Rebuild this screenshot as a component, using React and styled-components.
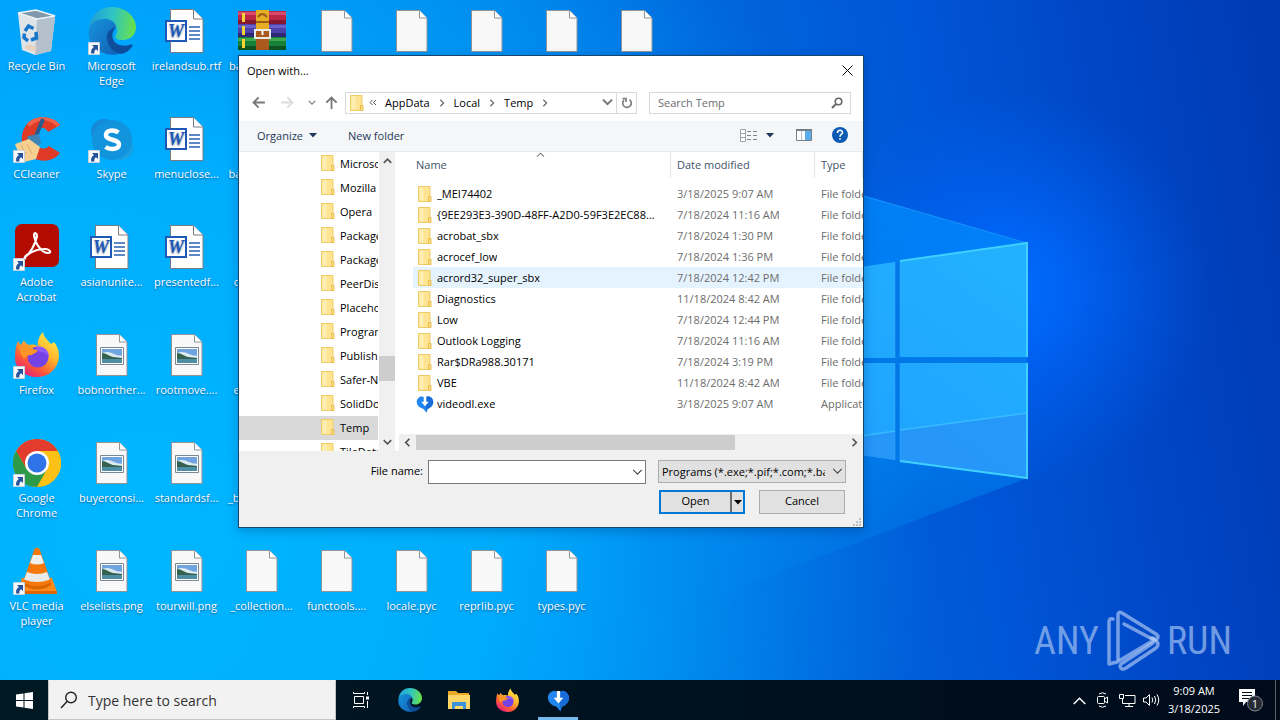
import React, { useId, useState } from 'react';
import styled, { createGlobalStyle } from 'styled-components';

const GlobalStyle = createGlobalStyle`
  * {
    box-sizing: border-box;
  }
  body {
    margin: 0;
    font-family: "Open Sans", "Noto Sans", sans-serif;
    font-size: 11px;
    overflow: hidden;
  }
  button, input, select {
    font: inherit;
    color: inherit;
    border: 0;
    padding: 0;
    margin: 0;
    background: none;
    border-radius: 0;
    outline: none;
  }
  svg {
    display: block;
    flex: none;
  }
`;

const Screen = styled.div`
  display: flex;
  flex-direction: column;
  height: 100vh;
  background: #0078d7;
`;

const Desktop = styled.main`
  position: relative;
  flex: 1;
  min-height: 0;
`;

const WallpaperSvg = styled.svg`
  position: absolute;
  inset: 0;
  width: 100%;
  height: 100%;
`;

const IconGrid = styled.div`
  position: relative;
  display: grid;
  grid-auto-flow: column;
  grid-template-rows: repeat(6, 108px);
  grid-auto-columns: 75px;
  margin-left: -1px;
`;

const Shortcut = styled.div`
  display: flex;
  flex-direction: column;
  align-items: center;
  gap: 3px;
  padding-top: 7px;
  color: #fff;
  line-height: 15px;
  text-align: center;
  text-shadow: 0 1px 2px rgba(0, 30, 80, 0.6);
`;

const ShortcutLabel = styled.span`
  width: 74px;
  overflow-wrap: break-word;
`;

const Watermark = styled.div`
  position: absolute;
  right: 48px;
  bottom: 7px;
  display: flex;
  align-items: center;
  gap: 6px;
  height: 64px;
  color: rgba(180, 205, 245, 0.65);
  font-family: "Roboto Condensed", "Open Sans Condensed", "Liberation Sans Narrow", Roboto, sans-serif;
  font-size: 38px;
  font-weight: 400;
`;

const Dialog = styled.section`
  position: absolute;
  left: 238px;
  top: 55px;
  width: 626px;
  border: 1px solid #17466f;
  background: #fff;
  color: #000;
  box-shadow: 0 3px 10px rgba(0, 20, 70, 0.25);
`;

const TitleBar = styled.header`
  display: flex;
  align-items: center;
  justify-content: space-between;
  height: 30px;
  padding: 0 8px 2px;
`;

const Title = styled.h1`
  margin: 0;
  font-size: 11px;
  font-weight: 400;
`;

const IconButton = styled.button`
  display: flex;
  align-items: center;
  justify-content: center;
  width: ${props => props.$w || 16}px;
  height: ${props => props.$h || 20}px;
`;

const NavRow = styled.div`
  display: flex;
  align-items: center;
  height: 35px;
  padding: 0 12px 2px 11px;
`;

const NavButtons = styled.div`
  display: flex;
  align-items: center;
  gap: 10px;
  width: 95px;
`;

const AddressBar = styled.div`
  display: flex;
  align-items: center;
  flex: 1;
  height: 22px;
  padding-left: 4px;
  border: 1px solid #d9d9d9;
`;

const Crumb = styled.button`
  padding: 0 8px;
`;

const ParentsButton = styled.button`
  padding-left: 5px;
`;

const Spacer = styled.div`
  flex: 1;
`;

const RefreshButton = styled(IconButton)`
  border-left: 1px solid #d9d9d9;
`;

const SearchField = styled.label`
  display: flex;
  align-items: center;
  width: 202px;
  height: 22px;
  margin-left: 12px;
  padding: 0 7px 0 8px;
  border: 1px solid #d9d9d9;
  input {
    flex: 1;
    min-width: 0;
  }
  input::placeholder {
    color: #6d6d6d;
    opacity: 1;
  }
`;

const Toolbar = styled.div`
  display: flex;
  align-items: center;
  height: 31px;
  padding: 0 15px 2px 18px;
  border-bottom: 1px solid #e8e9ea;
  background: #f5f6f7;
  color: #1e395b;
`;

const ToolButton = styled.button`
  display: flex;
  align-items: center;
  gap: 6px;
  margin-right: ${props => props.$after || 0}px;
`;

const Panes = styled.div`
  display: flex;
  height: 299px;
`;

const Tree = styled.ul`
  width: 139px;
  margin: 0;
  padding: 0;
  overflow: hidden;
  list-style: none;
`;

const TreeItem = styled.li`
  display: flex;
  align-items: center;
  gap: 5px;
  height: 24px;
  padding: 0 0 2px 82px;
  white-space: nowrap;
  background: ${props => (props.$selected ? '#d9d9d9' : 'transparent')};
`;

const VScroll = styled.div`
  display: flex;
  flex-direction: column;
  align-items: center;
  width: 16px;
  margin: 0 4px 0 1px;
  background: #f0f0f0;
`;

const VThumb = styled.div`
  width: 16px;
  height: 25px;
  margin: 187px 0 53px;
  background: #cdcdcd;
`;

const ListPane = styled.div`
  display: flex;
  flex-direction: column;
  justify-content: space-between;
  flex: 1;
  min-width: 0;
  overflow: hidden;
`;

const FileTable = styled.table`
  width: 100%;
  table-layout: fixed;
  border-collapse: collapse;
  white-space: nowrap;
  td, th {
    padding: 0;
    overflow: hidden;
    font-weight: 400;
    text-align: left;
  }
`;

const Gutter = styled.col`
  width: ${props => props.$w}px;
`;

const HeadLabel = styled.div`
  position: relative;
  height: 26px;
  margin-bottom: 5px;
  padding-left: ${props => props.$pad}px;
  border-right: 1px solid #e5e5e5;
  color: #43536b;
  line-height: 26px;
`;

const SortMark = styled.span`
  position: absolute;
  left: 123px;
  top: -2px;
`;

const FileRow = styled.tr`
  height: 21px;
  td:not(:first-child) {
    background: ${props => (props.$hot ? '#e5f3ff' : 'transparent')};
  }
`;

const NameCell = styled.div`
  display: flex;
  align-items: center;
  gap: 3px;
  height: 21px;
  padding: 0 12px 0 3px;
  span {
    overflow: hidden;
    text-overflow: ellipsis;
  }
`;

const FileIcon = styled.i`
  display: flex;
  justify-content: center;
  flex: none;
  width: 18px;
`;

const MetaCell = styled.td`
  color: #6d6d6d;
  div {
    padding-left: 6px;
  }
`;

const HScroll = styled.div`
  display: flex;
  align-items: center;
  height: 17px;
  background: #f0f0f0;
`;

const HThumb = styled.div`
  width: 319px;
  height: 15px;
  background: #cdcdcd;
`;

const Footer = styled.footer`
  display: flex;
  flex-direction: column;
  gap: 6px;
  height: 76px;
  padding: 9px 17px 0 0;
  background: #f0f0f0;
`;

const FooterRow = styled.div`
  display: flex;
  align-items: flex-start;
  justify-content: flex-end;
  height: 24px;
  line-height: 22px;
`;

const ButtonRow = styled(FooterRow)`
  padding-right: 1px;
`;

const FileNameLabel = styled.label`
  margin-right: 5px;
`;

const ComboBox = styled.div`
  display: flex;
  align-items: center;
  width: 218px;
  height: 24px;
  margin-right: 12px;
  border: 1px solid #7a7a7a;
  background: #fff;
  input {
    flex: 1;
    min-width: 0;
    padding-left: 4px;
  }
`;

const SelectWrap = styled.div`
  position: relative;
  width: 188px;
  height: 23px;
  select {
    width: 100%;
    height: 100%;
    padding: 0 20px 2px 3px;
    border: 1px solid #adadad;
    background: #e1e1e1;
    appearance: none;
  }
`;

const SelectArrow = styled.span`
  position: absolute;
  right: 3px;
  top: 6px;
  pointer-events: none;
`;

const SplitButton = styled.div`
  display: flex;
  width: 86px;
  height: 24px;
  margin-right: 14px;
  border: 2px solid #0078d7;
  background: #e1e1e1;
  button:first-child {
    flex: 1;
    line-height: 18px;
    padding-bottom: 2px;
  }
  button:last-child {
    display: flex;
    align-items: center;
    justify-content: center;
    width: 13px;
    border-left: 2px solid #6d6d6d;
  }
`;

const PlainButton = styled.button`
  width: 86px;
  height: 24px;
  padding-bottom: 2px;
  border: 1px solid #adadad;
  background: #e1e1e1;
  line-height: 20px;
`;

const Grip = styled.svg`
  position: absolute;
  right: 2px;
  bottom: 1px;
`;

const TaskBar = styled.nav`
  display: flex;
  height: 40px;
  background: linear-gradient(90deg, #001923, #00121f 50%, #000b1a);
  color: #fff;
`;

const TaskButton = styled.button`
  display: flex;
  align-items: center;
  justify-content: center;
  width: ${props => props.$w || 49}px;
  border-bottom: 3px solid transparent;
  border-top: 3px solid transparent;
`;

const RunningButton = styled(TaskButton)`
  width: 40px;
  margin-left: 6px;
  border-bottom-color: #76b9ed;
`;

const TaskSearch = styled.label`
  display: flex;
  align-items: center;
  gap: 10px;
  width: 288px;
  padding-left: 11px;
  border: 1px solid #c4c4c4;
  border-top-color: #f2f2f2;
  background: #f2f2f2;
  color: #222;
  font-size: 14px;
  input {
    width: 200px;
  }
  input::placeholder {
    color: #333;
    opacity: 1;
  }
`;

const Tray = styled.div`
  display: flex;
  align-items: center;
  margin-left: auto;
`;

const Clock = styled.time`
  display: flex;
  flex-direction: column;
  width: 62px;
  line-height: 18px;
  text-align: center;
`;

const ShowDesktop = styled.button`
  width: 5px;
  height: 40px;
  border-left: 1px solid #56606b;
`;

const stroke = { fill: 'none', strokeLinecap: 'square' };

const Chevron = ({ dir = 'down', size = 9, color = '#444', w = 1.5 }) => {
  const d = {
    down: 'M1.5 3 L5 6.5 L8.5 3',
    up: 'M1.5 7 L5 3.5 L8.5 7',
    left: 'M6.5 1.5 L3 5 L6.5 8.5',
    right: 'M3.5 1.5 L7 5 L3.5 8.5',
  }[dir];
  return (
    <svg width={size} height={size} viewBox="0 0 10 10">
      <path d={d} {...stroke} stroke={color} strokeWidth={w} />
    </svg>
  );
};

const Caret = ({ color = '#1e395b' }) => (
  <svg width="8" height="5" viewBox="0 0 8 5"><path d="M0 0h8L4 4.5z" fill={color} /></svg>
);

const FolderIcon = () => (
  <svg width="14" height="16" viewBox="0 0 14 16">
    <path d="M.5.5h11.500v15H.5z" fill="#ffe593" stroke="#edcb65" />
    <path d="M1.500 1.500h4v13h-4z" fill="#ffeeb4" />
    <path d="M10.500 10.500h2.500v5h-2.500z" fill="#ffdc79" stroke="#e6bf55" />
  </svg>
);

const DownloadHeart = ({ size = 18 }) => (
  <svg width={size} height={size} viewBox="0 0 24 24">
    <path d="M5 2.500C2 4 .5 7 1 10c.6 5 5 7.500 9 8.500l4 5 1.500-5C20 17 23 13 23 9.500c0-3-2-6-5-7-2-.5-4 0-6 1.500C10 2 7.500 1.500 5 2.500z" fill="#2186f0" />
    <path d="M12 3.500c2-1.500 4-2 6-1.500 3 1 5 4 5 7 0 5-4 8.500-8 9.500l-1 4z" fill="#176cd8" />
    <path d="M10.300 2h3.400v7H17l-5 6-5-6h3.300z" fill="#fff" />
  </svg>
);

const ShortcutArrow = () => (
  <g>
    <path d="M.5 35.500h11v12H.5z" fill="#f7f9fb" stroke="#c3d2de" />
    <path d="M4 38h6v6L8 42.200C6.600 43.200 6.200 44.400 6.400 46.500H3.200C2.600 43.500 3.600 41.400 5.900 40z" fill="#25539b" />
  </g>
);

const Page = ({ x = 8, y = 3 }) => (
  <g transform={`translate(${x} ${y})`}>
    <path d="M.5.5h23L31 8v33.500H.5z" fill="#f8f8f8" stroke="#8f9499" />
    <path d="M23.500.5V8H31" fill="#fff" stroke="#8f9499" />
  </g>
);

const EdgeShape = () => {
  const id = useId();
  return (
    <g>
      <defs>
        <linearGradient id={id + 'a'} x1="0" x2="1" y1="0.300" y2="0.400">
          <stop offset="0" stopColor="#1f9bd8" />
          <stop offset=".5" stopColor="#2fc5c4" />
          <stop offset="1" stopColor="#69e04a" />
        </linearGradient>
        <linearGradient id={id + 'b'} x1="0" x2="1" y1="0" y2="1">
          <stop offset="0" stopColor="#1693dc" />
          <stop offset="1" stopColor="#1160b4" />
        </linearGradient>
      </defs>
      <path d="M1 22C2 9 11 0 24 0s24 9.500 24 20c0 8-6 13-13 13-6 0-9-2-7-5 3-4 1-13-9-14C11 13 4 16 1 22z" fill={`url(#${id}a)`} />
      <path d="M1 22c2-6 9-11 18-10 6 1 9 5 9 8-5 0-9 4-9 10 0 7 5 14 12 17C14 51-2 38 1 22z" fill={`url(#${id}b)`} />
      <path d="M28 20c-6 1-10 5-9 12 1 8 7 14 14 15 5-1 9-4 11.500-8 .6-1-.4-2-1.500-1.400C34 41 23 37 24.500 27c.4-3 2-5 3.500-7z" fill="#0d4d9c" />
    </g>
  );
};

const FirefoxShape = () => {
  const id = useId();
  return (
    <g>
      <defs>
        <linearGradient id={id} x1=".85" x2=".2" y1=".05" y2="1">
          <stop offset="0" stopColor="#fff04a" />
          <stop offset=".4" stopColor="#ffb02b" />
          <stop offset=".7" stopColor="#ff5a36" />
          <stop offset="1" stopColor="#e31587" />
        </linearGradient>
      </defs>
      <path d="M5 10c1 2 2 3 3 4l3-5c1 3 3 4 5 5 4-1 7 0 9 1-1-6 2-11 5-14 1 6 5 8 8 12l3-2c5 6 6 13 4 20-3 9-11 15-21 15C12 46 2 38 2 27 2 20 3 14 5 10z" fill={`url(#${id})`} />
      <circle cx="25" cy="26" r="10.500" fill="#7542e5" />
      <path d="M6 14c4 2 8 1 11 2 3 2 5 3 8 3-1 3-4 3-6 5-2 0-6 0-8 4-3-4-5-9-5-14z" fill="#ff9526" />
      <path d="M22 16c8-2 14 3 14 10-2-4-6-5-9-5-2-1-4-3-5-5z" fill="#9059ff" />
    </g>
  );
};

const WordGlyph = () => (
  <g>
    <g transform="translate(7 2)">
      <path d="M.5.5h23L33 10v33.500H.5z" fill="#fff" stroke="#777c82" />
      <path d="M23.500.5V10H33" fill="#fff" stroke="#777c82" />
    </g>
    <path d="M26 20h11M26 24h11M26 28h11M26 32h11" stroke="#2b5fb3" strokeWidth="1.500" />
    <path d="M3 14h20v20H3z" fill="#fff" stroke="#1d59b5" strokeWidth="2" />
    <text x="13" y="30" textAnchor="middle" fontFamily="Liberation Serif, serif" fontWeight="700" fontStyle="italic" fontSize="18" fill="#1d59b5">W</text>
  </g>
);

const PictureGlyph = () => (
  <g>
    <Page />
    <path d="M12.500 16.500h23v17h-23z" fill="#fff" stroke="#7b8790" />
    <path d="M14 18h20v8H14z" fill="#6fa4e0" />
    <path d="M14 22c5-2 8-1 12 1s6 1 8 2v3H14z" fill="#dceaf2" />
    <path d="M14 22c4 0 7 3 11 4l9 1v2H14z" fill="#35614f" />
    <path d="M14 28h20v4H14z" fill="#4f8fa6" />
  </g>
);

const RecycleGlyph = () => (
  <g>
    <path d="M5 6l19 6 18-2-4 34-16 4-13-5z" fill="#dfe4e8" />
    <path d="M24 12l18-2-4 34-16 4z" fill="#b4c1cc" />
    <path d="M5 6l18-3 19 6-18 3z" fill="#7f98aa" stroke="#eef4f8" strokeWidth="1.500" />
    <g fill="none" stroke="#1676c9" strokeWidth="3.500">
      <path d="M12 24l3.500-5 5 2.500" />
      <path d="M23 25l.5 6-5.500 2" />
      <path d="M15 34l-4-3.500.5-4" />
    </g>
    <path d="M11 40l5-3 8 3-2 5-9-3z" fill="#eccdb6" opacity=".8" />
  </g>
);

const CCleanerGlyph = () => (
  <g>
    <path d="M47 10C40 1 23-1 14 9c-9 11-6 27 6 34 10 5 21 3 27-5l-11-7c-4 4-10 3-12-1-4-5-3-13 2-16 4-2 7-1 9 3z" fill="#df3a25" />
    <path d="M47 10C40 1 23-1 14 9l3 3C25 3 38 4 44 12z" fill="#f0644d" />
    <path d="M30 4l-9 22" stroke="#285c8e" strokeWidth="4" />
    <path d="M15 21l11-2 2 10-9 4-6-5z" fill="#3e83b5" />
    <path d="M2 29l14-5 11 8-4 12-12 3-4-5z" fill="#f6cf92" />
    <path d="M8 30l5 9M14 29l5 10" stroke="#ddaa65" />
  </g>
);

const SkypeGlyph = () => (
  <g>
    <circle cx="16" cy="17" r="13" fill="#1688d6" />
    <circle cx="33" cy="33" r="12" fill="#1aa0e3" />
    <circle cx="24" cy="25" r="20" fill="#1294dc" />
    <path d="M30.500 17.500c-2-1.500-4-2-6.500-2-4 0-6 2-6 4.500 0 6 13 3.500 13 9.500 0 3-3 4.500-6.500 4.500-3 0-5-.5-7-2" fill="none" stroke="#fff" strokeWidth="4.500" />
  </g>
);

const AcrobatGlyph = () => (
  <g>
    <rect x="2" y="1" width="44" height="43" rx="7" fill="#b30b00" />
    <path d="M12 34c5-3 11-14 12-21 0-3-3-4-3-1 1 9 8 18 14 18 4 0 2-4-3-4-7 0-14 3-18 6-3 2-3 4-1 3" fill="none" stroke="#fff" strokeWidth="2.200" />
  </g>
);

const ChromeGlyph = () => (
  <g>
    <circle cx="24" cy="24" r="24" fill="#fbbc05" />
    <path d="M3.200 12A24 24 0 0 1 44.800 12H24L13.600 30z" fill="#e33b2e" />
    <path d="M3.200 12A24 24 0 0 0 24 48L34.400 30 24 34 13.600 30z" fill="#2c9a47" />
    <path d="M24 12h20.800A24 24 0 0 1 24 48l10.400-18z" fill="#fbc116" />
    <circle cx="24" cy="24" r="12" fill="#fff" />
    <circle cx="24" cy="24" r="9.500" fill="#2f73e8" />
  </g>
);

const VlcGlyph = () => (
  <g>
    <path d="M9 31h30l5 14H5z" fill="#fb8a1a" />
    <path d="M5 44h39v3H5z" fill="#e06500" />
    <path d="M10 35q14 8 28 0v3q-14 9-28 0z" fill="#d96400" />
    <path d="M21.500 2q2.500-2.500 5 0L38 35q-14 8-28 0z" fill="#f7780a" />
    <path d="M20 8h8l3 8q-7 3-14 0z" fill="#eef0f0" />
    <path d="M14 25q10 4 20 0l3 7.500q-13 5-26 0z" fill="#e8eaea" />
  </g>
);

const WinrarGlyph = () => (
  <g>
    <rect x="0" y="4" width="48" height="13" fill="#bd2747" />
    <path d="M0 5h48v3H0z" fill="#d84a6c" />
    <path d="M0 13h48v4H0z" fill="#861730" />
    <rect x="0" y="17" width="48" height="13" fill="#4b41ab" />
    <path d="M0 18h48v3H0z" fill="#6a60c4" />
    <path d="M0 26h48v4H0z" fill="#2f2878" />
    <rect x="0" y="30" width="48" height="13" fill="#178237" />
    <path d="M0 31h48v3H0z" fill="#3da64e" />
    <path d="M0 39h48v4H0z" fill="#0c5422" />
    <path d="M4 6h3v9H4zM4 19h3v9H4zM4 32h3v9H4z" fill="#f4d432" />
    <path d="M18 3h13v40H18z" fill="#a95a1c" />
    <path d="M18 3h13v19H18z" fill="#e6ae23" />
    <path d="M20 10q4-6 9 0M18 15h13" fill="none" stroke="#9a5b12" strokeWidth="2" />
    <path d="M17 23h15v8H17z" fill="none" stroke="#e9e9e9" strokeWidth="2" />
    <path d="M24.500 23v5" stroke="#fff" strokeWidth="2" />
  </g>
);

const glyphs = {
  recycle: RecycleGlyph,
  edge: EdgeShape,
  word: WordGlyph,
  rar: WinrarGlyph,
  page: Page,
  ccleaner: CCleanerGlyph,
  skype: SkypeGlyph,
  acrobat: AcrobatGlyph,
  firefox: FirefoxShape,
  picture: PictureGlyph,
  chrome: ChromeGlyph,
  vlc: VlcGlyph,
};

// filled column by column, six per column; null leaves the cell free
const shortcuts = [
  ['recycle', 'Recycle Bin'],
  ['ccleaner', 'CCleaner', true],
  ['acrobat', 'Adobe Acrobat', true],
  ['firefox', 'Firefox', true],
  ['chrome', 'Google Chrome', true],
  ['vlc', 'VLC media player', true],
  ['edge', 'Microsoft Edge', true],
  ['skype', 'Skype', true],
  ['word', 'asianunite...'],
  ['picture', 'bobnorther...'],
  ['picture', 'buyerconsi...'],
  ['picture', 'elselists.png'],
  ['word', 'irelandsub.rtf'],
  ['word', 'menuclose...'],
  ['word', 'presentedf...'],
  ['picture', 'rootmove....'],
  ['picture', 'standardsf...'],
  ['picture', 'tourwill.png'],
  ['rar', 'base_librar...'],
  ['page', 'base64.pyc...'],
  ['page', 'codecs.pyc'],
  ['page', 'enum.pyc..'],
  ['page', '_bootlocale...'],
  ['page', '_collection...'],
  ['page', ''], null, null, null, null, ['page', 'functools....'],
  ['page', ''], null, null, null, null, ['page', 'locale.pyc'],
  ['page', ''], null, null, null, null, ['page', 'reprlib.pyc'],
  ['page', ''], null, null, null, null, ['page', 'types.pyc'],
  ['page', ''],
];

const treeFolders = [
  'Microsoft', 'Mozilla', 'Opera', 'Packages', 'Package Cache', 'PeerDistRepub', 'Placeholder',
  'Programs', 'Publishers', 'Safer-Networking', 'SolidDocuments', 'Temp', 'TileDataLayer',
];

const files = [
  ['_MEI74402', '3/18/2025 9:07 AM', 'File folder'],
  ['{9EE293E3-390D-48FF-A2D0-59F3E2EC88E1}', '7/18/2024 11:16 AM', 'File folder'],
  ['acrobat_sbx', '7/18/2024 1:30 PM', 'File folder'],
  ['acrocef_low', '7/18/2024 1:36 PM', 'File folder'],
  ['acrord32_super_sbx', '7/18/2024 12:42 PM', 'File folder'],
  ['Diagnostics', '11/18/2024 8:42 AM', 'File folder'],
  ['Low', '7/18/2024 12:44 PM', 'File folder'],
  ['Outlook Logging', '7/18/2024 11:16 AM', 'File folder'],
  ['Rar$DRa988.30171', '7/18/2024 3:19 PM', 'File folder'],
  ['VBE', '11/18/2024 8:42 AM', 'File folder'],
  ['videodl.exe', '3/18/2025 9:07 AM', 'Application'],
];

const Wallpaper = () => (
  <WallpaperSvg viewBox="0 0 1280 680" preserveAspectRatio="xMidYMid slice" aria-hidden="true">
    <defs>
      <linearGradient id="sky" x1="0" x2="1" y1="0.080" y2="0">
        <stop offset="0" stopColor="#00a6fb" />
        <stop offset=".2" stopColor="#009cf5" />
        <stop offset=".4" stopColor="#0083ea" />
        <stop offset=".55" stopColor="#0067dd" />
        <stop offset=".72" stopColor="#0055d6" />
        <stop offset=".86" stopColor="#0045c4" />
        <stop offset="1" stopColor="#0039b0" />
      </linearGradient>
      <radialGradient id="pool" gradientUnits="userSpaceOnUse" cx="150" cy="520" r="780">
        <stop offset="0" stopColor="#00b6ff" />
        <stop offset=".45" stopColor="#00b0ff" stopOpacity=".85" />
        <stop offset="1" stopColor="#0094f5" stopOpacity="0" />
      </radialGradient>
      <radialGradient id="halo" gradientUnits="userSpaceOnUse" cx="1010" cy="290" r="200">
        <stop offset="0" stopColor="#006cff" />
        <stop offset=".3" stopColor="#0069ff" stopOpacity=".75" />
        <stop offset="1" stopColor="#0060f0" stopOpacity="0" />
      </radialGradient>
      <linearGradient id="cone" x1="0" x2="0" y1="0" y2="1">
        <stop offset="0" stopColor="#008fff" stopOpacity=".7" />
        <stop offset=".6" stopColor="#008cf5" stopOpacity=".6" />
        <stop offset="1" stopColor="#008cf0" stopOpacity=".05" />
      </linearGradient>
      <linearGradient id="glass" x1="0" x2="1" y1="1" y2="0">
        <stop offset="0" stopColor="#1e9cff" />
        <stop offset="1" stopColor="#22b2ff" />
      </linearGradient>
    </defs>
    <path d="M0 0h1280v680H0z" fill="url(#sky)" />
    <path d="M0 0h1280v680H0z" fill="url(#pool)" />
    <path d="M0 0h1280v680H0z" fill="url(#halo)" />
    <path d="M640 130L1027 243V478L640 625z" fill="url(#cone)" />
    <path d="M863 196L1027 243" stroke="#2fa6ff" opacity=".5" />
    <path d="M700 290L895 262V358H700zM900 261L1027 243V357H900zM700 363H895V460L700 432zM900 363H1027V478L900 461z" fill="url(#glass)" />
    <path d="M895 262h5v96h127v5H900v98h-5v-98H700v-5h195z" fill="#0078e8" />
    <path d="M900 430L1027 413V478L900 461zM800 445L895 431V460L800 446z" fill="#2b8df5" opacity=".6" />
    <path d="M800 445L895 431M900 430L1027 413" stroke="#37bcff" strokeWidth="1.500" />
    <path d="M895 262V358M900 261V357M895 363V460M900 363V461" stroke="#3aa9ff" opacity=".5" />
    <path d="M900 261L1027 243V357M900 461L1027 478V363" fill="none" stroke="#3fd0ff" strokeWidth="2" />
  </WallpaperSvg>
);

const DesktopShortcut = ({ glyph, label, linked }) => {
  const Glyph = glyphs[glyph];
  return (
    <Shortcut>
      <svg width="48" height="48" viewBox="0 0 48 48">
        <Glyph />
        {linked && <ShortcutArrow />}
      </svg>
      <ShortcutLabel>{label}</ShortcutLabel>
    </Shortcut>
  );
};

const Arrow = ({ d, color = '#777' }) => (
  <svg width="13" height="13" viewBox="0 0 13 13">
    <path d={d} {...stroke} stroke={color} strokeWidth="1.800" />
  </svg>
);

const OpenDialog = () => {
  const [query, setQuery] = useState('');
  const [fileName, setFileName] = useState('');

  return (
    <Dialog role="dialog" aria-label="Open with...">
      <TitleBar>
        <Title>Open with...</Title>
        <IconButton aria-label="Close">
          <svg width="11" height="11" viewBox="0 0 11 11"><path d="M.5.5l10 10M10.500.5l-10 10" stroke="#000" /></svg>
        </IconButton>
      </TitleBar>

      <NavRow>
        <NavButtons>
          <IconButton aria-label="Back"><Arrow d="M12 6.500H2M6 2L1.500 6.500 6 11" /></IconButton>
          <IconButton $w={22} aria-label="Forward"><Arrow d="M1 6.500h10M7 2l4.500 4.500L7 11" color="#dcdcdc" /></IconButton>
          <IconButton $w={7} aria-label="Recent locations"><Chevron size={8} color="#888" /></IconButton>
          <IconButton $w={13} aria-label="Up"><Arrow d="M6.500 12V2M2 6l4.500-4.500L11 6" /></IconButton>
        </NavButtons>
        <AddressBar>
          <FolderIcon />
          <ParentsButton aria-label="Parent folders">
            <svg width="8" height="7" viewBox="0 0 8 7"><path d="M3.500 1L1 3.500 3.500 6M7 1L4.500 3.500 7 6" fill="none" stroke="#555" /></svg>
          </ParentsButton>
          {['AppData', 'Local', 'Temp'].map(name => (
            <React.Fragment key={name}>
              <Crumb>{name}</Crumb>
              <Chevron dir="right" size={8} color="#666" />
            </React.Fragment>
          ))}
          <Spacer />
          <IconButton $w={18} aria-label="Previous locations"><Chevron size={11} color="#777" w={1.8} /></IconButton>
          <RefreshButton $w={20} aria-label="Refresh">
            <svg width="12" height="12" viewBox="0 0 12 12">
              <path d="M8.500 2.600A4.300 4.300 0 1 1 3 3M1.500 1.500H5V5" fill="none" stroke="#777" strokeWidth="1.600" />
            </svg>
          </RefreshButton>
        </AddressBar>
        <SearchField>
          <input aria-label="Search Temp" placeholder="Search Temp" value={query} onChange={e => setQuery(e.target.value)} />
          <svg width="12" height="12" viewBox="0 0 12 12">
            <circle cx="7.500" cy="4.500" r="3.300" fill="none" stroke="#666" strokeWidth="1.600" />
            <path d="M5 7L1 11" stroke="#666" strokeWidth="2" />
          </svg>
        </SearchField>
      </NavRow>

      <Toolbar>
        <ToolButton $after={31}>Organize <Caret /></ToolButton>
        <ToolButton>New folder</ToolButton>
        <Spacer />
        <ToolButton $after={22} aria-label="Change view">
          <svg width="20" height="13" viewBox="0 0 20 13">
            <path d="M.5.500h5v12h-5zM.5 4.500h5M.5 8.500h5" fill="#fff" stroke="#9aa3ab" />
            <path d="M7 2.500h4M13 2.500h4M7 6.500h4M13 6.500h4M7 10.500h4M13 10.500h4" stroke="#7d8790" />
          </svg>
          <Caret />
        </ToolButton>
        <ToolButton $after={20} aria-label="Preview pane">
          <svg width="16" height="12" viewBox="0 0 16 12">
            <path d="M.5.500h15v11H.5z" fill="#fff" stroke="#72808c" />
            <path d="M0 0h16v2H0z" fill="#72808c" />
            <path d="M5.500 2v9" stroke="#b8c3cc" />
            <path d="M9 2h6v9H9z" fill="#5aaceb" />
          </svg>
        </ToolButton>
        <ToolButton aria-label="Help">
          <svg width="16" height="16" viewBox="0 0 16 16">
            <circle cx="8" cy="8" r="8" fill="#0b5bb5" />
            <path d="M5.500 6c0-3.500 5-3.500 5-.5C10.500 7.500 8 7.500 8 9.700M8 11.200v1.600" fill="none" stroke="#fff" strokeWidth="1.600" />
          </svg>
        </ToolButton>
      </Toolbar>

      <Panes>
        <Tree>
          {treeFolders.map(name => (
            <TreeItem key={name} $selected={name === 'Temp'}><FolderIcon />{name}</TreeItem>
          ))}
        </Tree>
        <VScroll>
          <IconButton $h={17} aria-label="Scroll up"><Chevron dir="up" color="#505050" w={1.8} /></IconButton>
          <VThumb />
          <IconButton $h={17} aria-label="Scroll down"><Chevron color="#505050" w={1.8} /></IconButton>
        </VScroll>
        <ListPane>
          <FileTable>
            <colgroup>
              <Gutter $w={14} />
              <Gutter $w={258} />
              <Gutter $w={144} />
              <col />
            </colgroup>
            <thead>
              <tr>
                <th />
                <th><HeadLabel $pad={3}>Name<SortMark><Chevron dir="up" color="#777" w={1.2} /></SortMark></HeadLabel></th>
                <th><HeadLabel $pad={6}>Date modified</HeadLabel></th>
                <th><HeadLabel $pad={6}>Type</HeadLabel></th>
              </tr>
            </thead>
            <tbody>
              {files.map(([name, date, type]) => (
                <FileRow key={name} $hot={name === 'acrord32_super_sbx'}>
                  <td />
                  <td>
                    <NameCell>
                      <FileIcon>{type === 'Application' ? <DownloadHeart /> : <FolderIcon />}</FileIcon>
                      <span>{name}</span>
                    </NameCell>
                  </td>
                  <MetaCell><div>{date}</div></MetaCell>
                  <MetaCell><div>{type}</div></MetaCell>
                </FileRow>
              ))}
            </tbody>
          </FileTable>
          <HScroll>
            <IconButton $w={17} aria-label="Scroll left"><Chevron dir="left" color="#505050" w={1.8} /></IconButton>
            <HThumb />
            <Spacer />
            <IconButton $w={17} aria-label="Scroll right"><Chevron dir="right" color="#505050" w={1.8} /></IconButton>
          </HScroll>
        </ListPane>
      </Panes>

      <Footer>
        <FooterRow>
          <FileNameLabel htmlFor="file-name">File name:</FileNameLabel>
          <ComboBox>
            <input id="file-name" value={fileName} onChange={e => setFileName(e.target.value)} />
            <IconButton aria-label="Recent files"><Chevron size={11} w={1} /></IconButton>
          </ComboBox>
          <SelectWrap>
            <select aria-label="File type">
              <option>Programs (*.exe;*.pif;*.com;*.bat;*.cmd)</option>
            </select>
            <SelectArrow><Chevron size={11} w={1} /></SelectArrow>
          </SelectWrap>
        </FooterRow>
        <ButtonRow>
          <SplitButton>
            <button>Open</button>
            <button aria-label="Open options"><Caret color="#000" /></button>
          </SplitButton>
          <PlainButton>Cancel</PlainButton>
        </ButtonRow>
      </Footer>
      <Grip width="9" height="9" viewBox="0 0 9 9">
        <path d="M7 1h2v2H7zM7 4h2v2H7zM7 7h2v2H7zM4 4h2v2H4zM4 7h2v2H4zM1 7h2v2H1z" fill="#bfbfbf" />
      </Grip>
    </Dialog>
  );
};

const App = () => (
  <Screen>
    <GlobalStyle />
    <Desktop>
      <Wallpaper />
      <IconGrid>
        {shortcuts.map((item, i) =>
          item ? <DesktopShortcut key={i} glyph={item[0]} label={item[1]} linked={item[2]} /> : <div key={i} />
        )}
      </IconGrid>
      <Watermark>
        <span>ANY</span>
        <svg width="56" height="64" viewBox="0 0 56 64" fill="none" stroke="currentColor" strokeWidth="3.500" strokeLinejoin="round" strokeLinecap="round">
          <path d="M13 50V6q0-4 4-2L51 25q4 3 0 6l-3-2" />
          <path d="M8 10q-4-1-4 3v42l8-2 37-22L19 15" />
          <path d="M15 57q1 5 6 2l30-20q4-4 0-7l-5-3M16 55L48 34" />
        </svg>
        <span>RUN</span>
      </Watermark>
      <OpenDialog />
    </Desktop>

    <TaskBar>
      <TaskButton $w={48} aria-label="Start">
        <svg width="17" height="17" viewBox="0 0 17 17">
          <path d="M0 2.500L7.500 1.500V8H0zM8.500 1.300L17 0V8H8.500zM0 9h7.500v6.500L0 14.500zM8.500 9H17v8l-8.500-1.300z" fill="#fff" />
        </svg>
      </TaskButton>
      <TaskSearch>
        <svg width="18" height="18" viewBox="0 0 18 18">
          <circle cx="11" cy="6.500" r="5.300" fill="none" stroke="#222" strokeWidth="1.400" />
          <path d="M7 10.500L1 17" stroke="#222" strokeWidth="1.500" />
        </svg>
        <input aria-label="Type here to search" placeholder="Type here to search" />
      </TaskSearch>
      <TaskButton aria-label="Task view">
        <svg width="16" height="16" viewBox="0 0 16 16" fill="none" stroke="#fff">
          <path d="M1.500 4.500h9v7h-9zM.5 0v1.500h11V0M.5 16v-1.500h11V16M14.500 0v3M14.500 9v7" />
          <path d="M13 4.500h3v3h-3z" fill="#fff" stroke="none" />
        </svg>
      </TaskButton>
      <TaskButton aria-label="Microsoft Edge"><svg width="24" height="24" viewBox="0 0 48 48"><EdgeShape /></svg></TaskButton>
      <TaskButton aria-label="File Explorer">
        <svg width="22" height="20" viewBox="0 0 22 20">
          <path d="M0 1h8l2 2h11v15H0z" fill="#e9a825" />
          <path d="M0 5h22v14H0z" fill="#ffd766" />
          <path d="M4 19v-7h14v7h-3v-3H7v3z" fill="#3b94d9" />
        </svg>
      </TaskButton>
      <TaskButton aria-label="Firefox"><svg width="25" height="25" viewBox="0 0 48 48"><FirefoxShape /></svg></TaskButton>
      <RunningButton aria-label="videodl"><DownloadHeart size={23} /></RunningButton>
      <Tray>
        <IconButton $w={24} aria-label="Show hidden icons"><Chevron dir="up" size={15} color="#fff" w={1} /></IconButton>
        <IconButton $w={24} aria-label="Meet now">
          <svg width="12" height="16" viewBox="0 0 12 16" fill="none" stroke="#fff">
            <rect x=".5" y="4.500" width="7" height="7" rx="1" />
            <path d="M7.500 7l3-2v6l-3-2M2 2q3.500-2.500 7 0M2 14q3.500 2.500 7 0" />
          </svg>
        </IconButton>
        <IconButton $w={24} aria-label="Network">
          <svg width="17" height="15" viewBox="0 0 17 15" fill="none" stroke="#fff">
            <path d="M6 2.500h10v8H3.500V6M6 13.500h8M10 11v2.500M.5 1.500h4v4h-4z" />
          </svg>
        </IconButton>
        <IconButton $w={24} aria-label="Volume">
          <svg width="17" height="14" viewBox="0 0 17 14" fill="none" stroke="#fff">
            <path d="M.5 5h2.500L6.500 1.500v11L3 9H.5zM9 4.500q1.500 2.500 0 5M11.500 3q2.500 4 0 8M14 1.500q3.500 5.500 0 11" />
          </svg>
        </IconButton>
        <Clock><span>9:09 AM</span><span>3/18/2025</span></Clock>
        <IconButton $w={50} aria-label="1 new notification">
          <svg width="26" height="24" viewBox="0 0 26 24">
            <path d="M2 1h16v13h-9l-3 4v-4H2z" fill="#fff" />
            <path d="M5 4.500h10M5 7.500h10M5 10.500h7" stroke="#000b1a" />
            <circle cx="18" cy="15.500" r="7.500" fill="#272c34" stroke="#808791" />
            <text x="18" y="20" textAnchor="middle" fontSize="11" fill="#fff">1</text>
          </svg>
        </IconButton>
        <ShowDesktop aria-label="Show desktop" />
      </Tray>
    </TaskBar>
  </Screen>
);

export default App;
